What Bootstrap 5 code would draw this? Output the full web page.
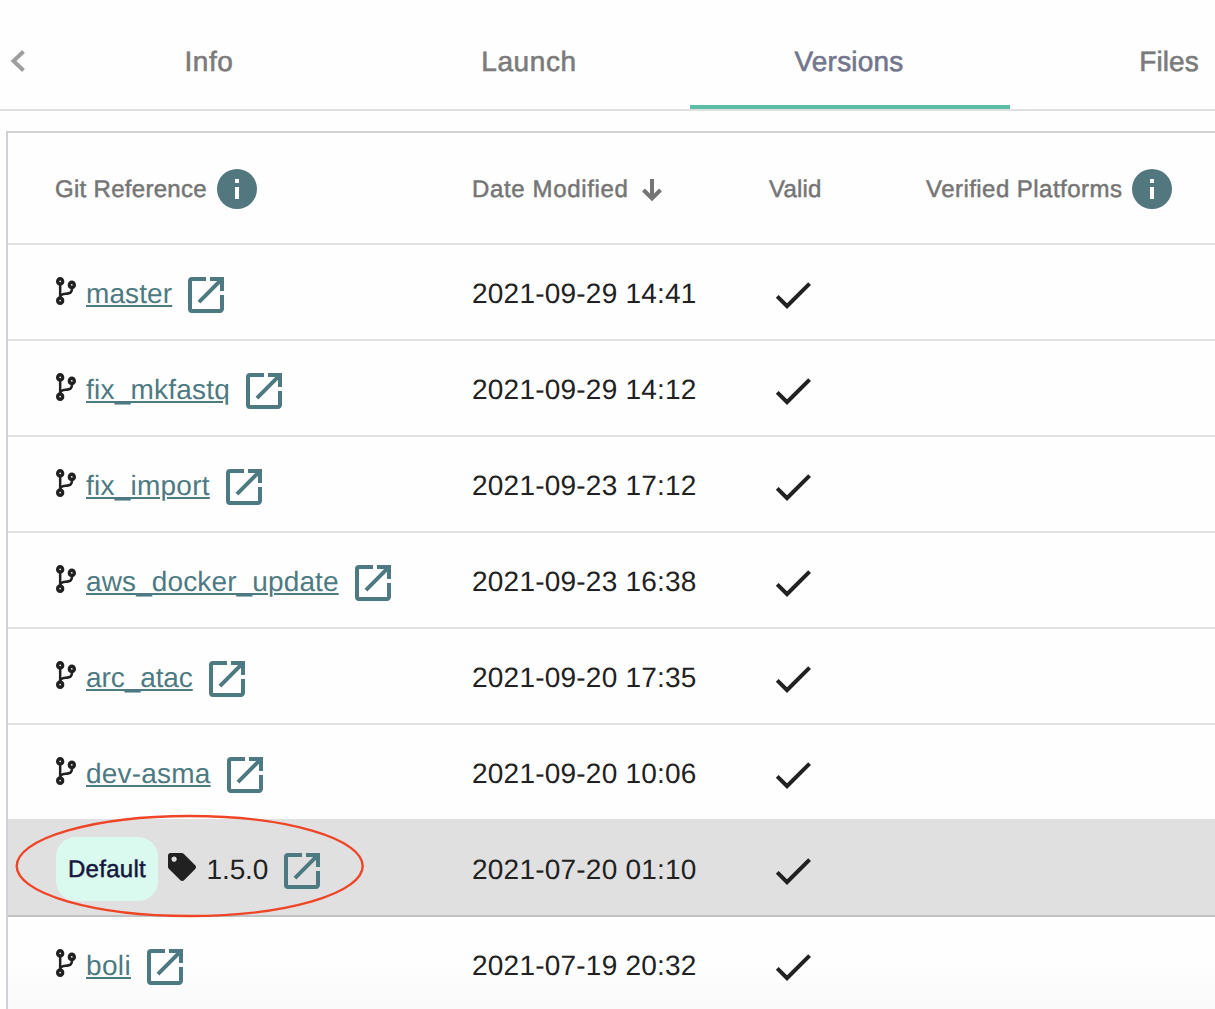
<!DOCTYPE html>
<html lang="en">
<head>
<meta charset="utf-8">
<meta name="viewport" content="width=device-width, initial-scale=1">
<title>Versions</title>
<link href="https://cdn.jsdelivr.net/npm/bootstrap@5.3.0/dist/css/bootstrap.min.css" rel="stylesheet">
<style>
html, body { height: 1009px; overflow: hidden; }
body { font-family: "Liberation Sans", Arial, sans-serif; font-size: 28px; line-height: 32px; color: #212121; background: #fefefe; text-rendering: geometricPrecision; }
svg { display: block; flex: none; }
.tabs-strip { height: 111px; border-bottom: 2px solid #e0e0e0; }
.pager { width: 50px; flex: none; padding: 49px 0 0 10px; }
.tabs-strip .nav-link { width: 320px; flex: none; height: 109px; padding: 18px 0 0; color: #7b7b7b; border-radius: 0; border-bottom: 4px solid transparent; -webkit-text-stroke: .6px currentColor; }
.tabs-strip .nav-link span { margin-right: 2px; }
.tabs-strip .nav-link.active { color: #73768c; border-bottom-color: #5bbda4; }
.versions-box { margin: 20px 0 0 6px; border: 2px solid #cfcfd4; border-right: 0; border-bottom: 0; height: 878px; }
.versions { table-layout: fixed; width: 1207px; margin: 0; color: inherit; border-collapse: separate; border-spacing: 0; }
.versions > :not(caption) > * > * { padding: 2px 0 0; background: transparent; border-bottom: 2px solid #e0e0e0; box-shadow: none; vertical-align: middle; white-space: nowrap; }
.versions th { height: 112px; font-size: 24px; font-weight: 400; color: #757575; -webkit-text-stroke: .5px currentColor; }
.versions th span, .versions td a, .versions td span { padding-top: 2px; }
.versions td { height: 96px; letter-spacing: .22px; }
.versions > tbody > tr > .c-date { padding-top: 4px; }
.versions > thead > tr > .c-valid { padding-top: 4px; }
.versions > * > tr > .c-ref { padding-left: 48px; }
.versions > thead > tr > .c-ref { padding-left: 47px; }
.versions > tbody > tr.picked > td { background: #e0e0e0; border-bottom-color: #c2c2c2; }
.versions > tbody > tr.tail > td { background: linear-gradient(#fefefe 50%, #f9f9f9); }
.ref-link { color: #4d7a82; text-decoration-thickness: 2px; text-underline-offset: 2px; }
.teal { color: #4d7a82; }
.branch { margin: -5px 10px 0 0; }
.open { margin: 4px 0 0 16px; }
.tick { margin: 4px 0 0 0; }
.pill { width: 102px; height: 64px; border-radius: 20px; background: #dafaef; color: #16163e; font-size: 24px; letter-spacing: .3px; -webkit-text-stroke: .5px currentColor; margin-right: 10px; }
.ring { left: 14px; top: 813px; z-index: 2; pointer-events: none; }
</style>
</head>
<body>
<svg class="d-none">
  <symbol id="branch" viewBox="0 0 384 512" preserveAspectRatio="none"><path fill="currentColor" d="M384 144c0-44.200-35.800-80-80-80s-80 35.800-80 80c0 36.400 24.300 67.100 57.500 76.800-.6 16.100-4.200 28.500-11 36.900-15.400 19.200-49.300 22.400-85.200 25.700-28.200 2.600-57.400 5.400-81.300 16.900v-144c32.500-10.200 56-40.500 56-76.300 0-44.200-35.800-80-80-80S0 35.800 0 80c0 35.800 23.500 66.100 56 76.300v199.300C23.500 365.900 0 396.200 0 432c0 44.200 35.800 80 80 80s80-35.800 80-80c0-34-21.200-63.100-51.200-74.600 3.100-5.200 7.800-9.800 14.900-13.400 16.200-8.200 40.400-10.400 66.100-12.800 42.200-3.900 90-8.400 118.200-43.400 14-17.400 21.100-39.800 21.600-67.900 31.600-10.800 54.400-40.700 54.400-75.900zM80 64c8.800 0 16 7.200 16 16s-7.200 16-16 16-16-7.200-16-16 7.200-16 16-16zm0 384c-8.800 0-16-7.200-16-16s7.200-16 16-16 16 7.200 16 16-7.200 16-16 16zm224-320c8.800 0 16 7.200 16 16s-7.200 16-16 16-16-7.200-16-16 7.200-16 16-16z"/></symbol>
  <symbol id="open" viewBox="3 3 18 18"><path fill="currentColor" d="M19 19H5V5h7V3H5a2 2 0 0 0-2 2v14a2 2 0 0 0 2 2h14c1.100 0 2-.9 2-2v-7h-2v7zM14 3v2h3.590l-9.830 9.830 1.410 1.410L19 6.410V10h2V3h-7z"/></symbol>
  <symbol id="tick" viewBox="0 0 24 24"><path fill="currentColor" d="M9 16.170 4.830 12l-1.420 1.410L9 19 21 7l-1.410-1.410z"/></symbol>
  <symbol id="info" viewBox="2 2 20 20"><path fill="#52777f" d="M12 2a10 10 0 1 0 0 20 10 10 0 0 0 0-20zm1 15h-2v-6h2v6zm0-8h-2V7h2v2z"/></symbol>
</svg>

<nav class="tabs-strip d-flex overflow-hidden">
  <div class="pager"><svg width="16" height="24" fill="none" stroke="#9e9e9e" stroke-width="4"><path d="M13.500 2.500 3.500 12l10 9.500"/></svg></div>
  <a class="nav-link d-flex align-items-center justify-content-center"><span style="letter-spacing:.6px">Info</span></a>
  <a class="nav-link d-flex align-items-center justify-content-center"><span style="letter-spacing:.6px">Launch</span></a>
  <a class="nav-link active d-flex align-items-center justify-content-center"><span style="letter-spacing:.2px">Versions</span></a>
  <a class="nav-link d-flex align-items-center justify-content-center"><span style="letter-spacing:.1px">Files</span></a>
</nav>

<div class="versions-box overflow-hidden">
<table class="table versions">
  <colgroup><col style="width:464px"><col style="width:297px"><col style="width:157px"><col></colgroup>
  <thead><tr>
    <th class="c-ref"><div class="d-flex align-items-center"><span style="letter-spacing:.3px">Git Reference</span><svg width="40" height="40" style="margin-left:10px"><use href="#info"/></svg></div></th>
    <th><div class="d-flex align-items-center"><span style="letter-spacing:.65px">Date Modified</span><svg width="20" height="24" style="margin:3px 0 0 13px" fill="none" stroke="#757575" stroke-width="4"><path d="M10 0v20M1.500 11l8.500 8.500 8.500-8.500"/></svg></div></th>
    <th class="c-valid"><span style="letter-spacing:.2px">Valid</span></th>
    <th><div class="d-flex align-items-center"><span style="letter-spacing:.46px">Verified Platforms</span><svg width="40" height="40" style="margin-left:10px"><use href="#info"/></svg></div></th>
  </tr></thead>
  <tbody>
  <tr><td class="c-ref"><div class="d-flex align-items-center"><svg class="branch" width="20" height="28"><use href="#branch"/></svg><a class="ref-link" href="#" style="letter-spacing:.1px">master</a><svg class="open teal" width="36" height="36"><use href="#open"/></svg></div></td><td class="c-date">2021-09-29 14:41</td><td><svg class="tick" width="48" height="48"><use href="#tick"/></svg></td><td></td></tr>
  <tr><td class="c-ref"><div class="d-flex align-items-center"><svg class="branch" width="20" height="28"><use href="#branch"/></svg><a class="ref-link" href="#" style="letter-spacing:.22px">fix_mkfastq</a><svg class="open teal" width="36" height="36"><use href="#open"/></svg></div></td><td class="c-date">2021-09-29 14:12</td><td><svg class="tick" width="48" height="48"><use href="#tick"/></svg></td><td></td></tr>
  <tr><td class="c-ref"><div class="d-flex align-items-center"><svg class="branch" width="20" height="28"><use href="#branch"/></svg><a class="ref-link" href="#" style="letter-spacing:.24px">fix_import</a><svg class="open teal" width="36" height="36"><use href="#open"/></svg></div></td><td class="c-date">2021-09-23 17:12</td><td><svg class="tick" width="48" height="48"><use href="#tick"/></svg></td><td></td></tr>
  <tr><td class="c-ref"><div class="d-flex align-items-center"><svg class="branch" width="20" height="28"><use href="#branch"/></svg><a class="ref-link" href="#" style="letter-spacing:.12px">aws_docker_update</a><svg class="open teal" width="36" height="36"><use href="#open"/></svg></div></td><td class="c-date">2021-09-23 16:38</td><td><svg class="tick" width="48" height="48"><use href="#tick"/></svg></td><td></td></tr>
  <tr><td class="c-ref"><div class="d-flex align-items-center"><svg class="branch" width="20" height="28"><use href="#branch"/></svg><a class="ref-link" href="#" style="letter-spacing:-.08px">arc_atac</a><svg class="open teal" width="36" height="36"><use href="#open"/></svg></div></td><td class="c-date">2021-09-20 17:35</td><td><svg class="tick" width="48" height="48"><use href="#tick"/></svg></td><td></td></tr>
  <tr><td class="c-ref"><div class="d-flex align-items-center"><svg class="branch" width="20" height="28"><use href="#branch"/></svg><a class="ref-link" href="#" style="letter-spacing:.2px">dev-asma</a><svg class="open teal" width="36" height="36"><use href="#open"/></svg></div></td><td class="c-date">2021-09-20 10:06</td><td><svg class="tick" width="48" height="48"><use href="#tick"/></svg></td><td></td></tr>
  <tr class="picked"><td class="c-ref"><div class="d-flex align-items-center"><span class="pill d-flex align-items-center justify-content-center">Default</span><svg width="28" height="28" viewBox="0 0 512 512" style="margin:-4px 10.5px 0 0"><path fill="currentColor" d="M0 252.118V48C0 21.490 21.490 0 48 0h204.118a48 48 0 0 1 33.941 14.059l211.882 211.882c18.745 18.745 18.745 49.137 0 67.882L293.823 497.941c-18.745 18.745-49.137 18.745-67.882 0L14.059 286.059A48 48 0 0 1 0 252.118zM112 64c-26.510 0-48 21.490-48 48s21.490 48 48 48 48-21.490 48-48-21.490-48-48-48z"/></svg><span style="letter-spacing:-.1px">1.5.0</span><svg class="open teal" width="36" height="36"><use href="#open"/></svg></div></td><td class="c-date">2021-07-20 01:10</td><td><svg class="tick" width="48" height="48"><use href="#tick"/></svg></td><td></td></tr>
  <tr class="tail"><td class="c-ref"><div class="d-flex align-items-center"><svg class="branch" width="20" height="28"><use href="#branch"/></svg><a class="ref-link" href="#" style="letter-spacing:.35px">boli</a><svg class="open teal" width="36" height="36"><use href="#open"/></svg></div></td><td class="c-date">2021-07-19 20:32</td><td><svg class="tick" width="48" height="48"><use href="#tick"/></svg></td><td></td></tr>
  </tbody>
</table>
</div>

<svg class="ring position-absolute" width="352" height="106"><ellipse cx="175.700" cy="53" rx="173" ry="50" fill="none" stroke="#ee4526" stroke-width="2.400"/></svg>
<script src="https://cdn.jsdelivr.net/npm/bootstrap@5.3.0/dist/js/bootstrap.bundle.min.js"></script>
</body>
</html>
